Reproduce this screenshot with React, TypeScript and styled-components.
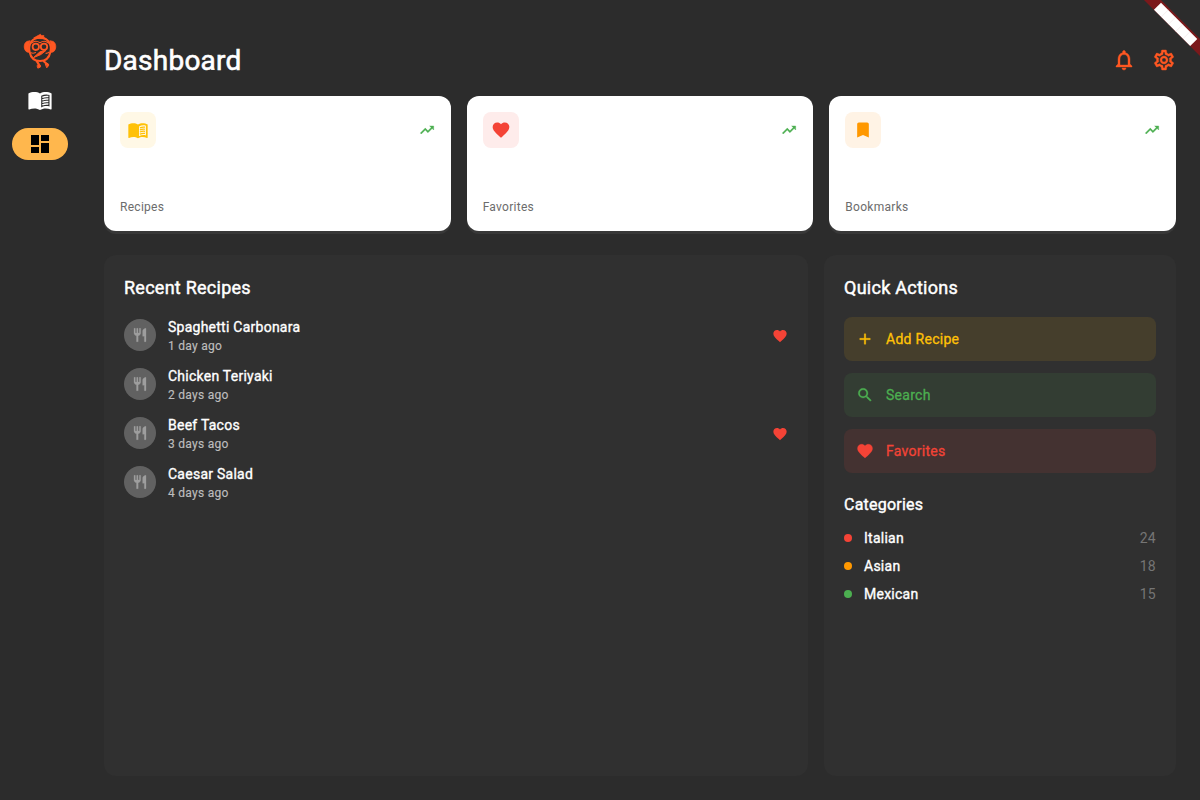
import React from 'react';
import styled, { createGlobalStyle } from 'styled-components';
import type { IconType } from 'react-icons';
import {
  MdAdd,
  MdBookmark,
  MdDashboard,
  MdFavorite,
  MdOutlineNotifications,
  MdOutlineSettings,
  MdRestaurant,
  MdSearch,
  MdTrendingUp,
} from 'react-icons/md';

const GlobalStyle = createGlobalStyle`
  * { box-sizing: border-box; }
  body {
    margin: 0;
    background: #2c2c2c;
    font-family: Roboto, "Liberation Sans", sans-serif;
    -webkit-font-smoothing: antialiased;
  }
  svg { display: block; flex: none; }
`;

const Shell = styled.div`
  position: relative;
  display: flex;
  width: 1200px;
  height: 800px;
  overflow: hidden;
  color: #fff;
`;

const Sidebar = styled.nav`
  width: 80px;
  display: flex;
  flex-direction: column;
  align-items: center;
  gap: 12px;
  padding-top: 32px;
`;

const Logo = styled.svg`
  width: 40px;
  height: 40px;
`;

const NavItem = styled.button<{ $active?: boolean }>`
  width: 56px;
  height: 32px;
  padding: 0;
  border: 0;
  border-radius: 16px;
  display: flex;
  align-items: center;
  justify-content: center;
  color: ${(p) => (p.$active ? '#000' : '#fff')};
  background: ${(p) => (p.$active ? '#ffb74d' : 'transparent')};
`;

const Main = styled.main`
  flex: 1;
  display: flex;
  flex-direction: column;
  padding: 24px;
`;

const Header = styled.header`
  height: 72px;
  display: flex;
  align-items: center;
  justify-content: space-between;
`;

const Title = styled.h1`
  margin: 0;
  padding-top: 2px;
  font-size: 28px;
  line-height: 36px;
  font-weight: 400;
  letter-spacing: 0.24px;
  -webkit-text-stroke: 0.6px currentColor;
`;

const HeaderIcons = styled.div`
  display: flex;
  gap: 16px;
  color: #ff5722;

  path:not([fill='none']) {
    stroke: currentColor;
    stroke-width: 0.4px;
  }
`;

const Stats = styled.section`
  display: grid;
  grid-template-columns: repeat(3, 1fr);
  gap: 16px;
  height: 135px;
  margin-bottom: 24px;
`;

const StatCard = styled.article`
  display: flex;
  flex-direction: column;
  justify-content: space-between;
  padding: 16px;
  border-radius: 12px;
  background: #fff;
  box-shadow: 0 3px 0 #383838;
`;

const StatTop = styled.div`
  display: flex;
  align-items: center;
  justify-content: space-between;
`;

const StatBadge = styled.div<{ $color: string; $tint: string }>`
  width: 36px;
  height: 36px;
  display: flex;
  align-items: center;
  justify-content: center;
  border-radius: 8px;
  color: ${(p) => p.$color};
  background: ${(p) => p.$tint};
`;

const Trend = styled(MdTrendingUp)`
  color: #4caf50;

  path:not([fill='none']) {
    stroke: currentColor;
    stroke-width: 0.6px;
  }
`;

const StatLabel = styled.div`
  font-size: 12px;
  line-height: 16px;
  letter-spacing: 0.28px;
  color: #6c6c6c;
`;

const Panels = styled.div`
  flex: 1;
  display: grid;
  grid-template-columns: 2fr 1fr;
  gap: 16px;
`;

const Panel = styled.section`
  padding: 20px;
  border-radius: 12px;
  background: #303030;
`;

const PanelTitle = styled.h2`
  margin: 0 0 16px;
  font-size: 18px;
  line-height: 26px;
  font-weight: 400;
  letter-spacing: 0.26px;
  -webkit-text-stroke: 0.45px currentColor;
`;

const RecipeRow = styled.div`
  height: 37px;
  margin-bottom: 12px;
  display: flex;
  align-items: center;
  gap: 12px;
  color: #f44336;
`;

const Avatar = styled.div`
  width: 32px;
  height: 32px;
  margin-bottom: 1px;
  border-radius: 50%;
  display: flex;
  align-items: center;
  justify-content: center;
  background: #616161;
  color: #9e9e9e;

  path:not([fill='none']) {
    stroke: currentColor;
    stroke-width: 0.4px;
  }
`;

const RecipeText = styled.div`
  flex: 1;
`;

const RecipeName = styled.div`
  font-size: 14px;
  line-height: 20px;
  font-weight: 400;
  letter-spacing: 0.25px;
  color: #fff;
  -webkit-text-stroke: 0.35px currentColor;
`;

const RecipeAge = styled.div`
  padding-top: 1px;
  font-size: 12px;
  line-height: 16px;
  letter-spacing: 0.28px;
  color: #bdbdbd;
  -webkit-text-stroke: 0.15px currentColor;
`;

const Action = styled.button<{ $color: string; $tint: string }>`
  width: 100%;
  height: 44px;
  margin-bottom: 12px;
  padding: 0 12px;
  border: 0;
  border-radius: 8px;
  display: flex;
  align-items: center;
  gap: 12px;
  font: 400 14px/20px Roboto, sans-serif;
  letter-spacing: 0.28px;
  -webkit-text-stroke: 0.3px currentColor;
  color: ${(p) => p.$color};
  background: ${(p) => p.$tint};
`;

const ActionIcon = styled.span`
  width: 18px;
  display: flex;
  justify-content: center;

  path:not([fill='none']) {
    stroke: currentColor;
    stroke-width: 0.4px;
  }
`;

const CategoriesTitle = styled.h3`
  margin: 20px 0 7px;
  font-size: 16px;
  line-height: 24px;
  font-weight: 400;
  letter-spacing: 0.23px;
  -webkit-text-stroke: 0.4px currentColor;
`;

const CategoryRow = styled.div`
  height: 28px;
  display: flex;
  align-items: center;
  font-size: 14px;
  letter-spacing: 0.25px;
`;

const Dot = styled.span<{ $color: string }>`
  width: 8px;
  height: 8px;
  margin-right: 12px;
  border-radius: 50%;
  background: ${(p) => p.$color};
`;

const CategoryName = styled.span`
  flex: 1;
  -webkit-text-stroke: 0.35px currentColor;
`;

const CategoryCount = styled.span`
  color: #757575;
`;

const Ribbon = styled.svg`
  position: absolute;
  top: 0;
  right: 0;
  width: 60px;
  height: 60px;
`;

function BookIcon({ size }: { size: number }) {
  return (
    <svg width={size} height={size} viewBox="0 -0.9 24 24" fill="currentColor">
      <path
        fillRule="evenodd"
        d="M0.400 4.600C2.300 3.500 4.300 3.100 6.400 3.100c2 0 4 .4 5.600 1.500C13.600 3.500 15.600 3.100 17.600 3.100c2.100 0 4.100.4 6 1.500v15.600c0 .4-.4.6-.8.400-1.600-.7-3.400-1.100-5.200-1.100-2 0-4 .5-5.600 1.600-1.600-1.100-3.600-1.600-5.600-1.600-1.800 0-3.600.4-5.200 1.100-.4.200-.8 0-.8-.400zM21.500 6c-2.600-.9-5.800-.6-8.300.8v11.700c2.500-1.300 5.700-1.700 8.300-.9z"
      />
      <path
        d="M14.300 8.500c1.900-.8 4.100-1.100 6.100-.8M14.300 11c1.900-.8 4.100-1.100 6.100-.8M14.300 13.500c1.900-.8 4.100-1.100 6.100-.8M14.300 16c1.900-.8 4.100-1.100 6.100-.8"
        fill="none"
        stroke="currentColor"
        strokeWidth="1.500"
      />
    </svg>
  );
}

type Glyph = IconType | typeof BookIcon;

const stats: { label: string; icon: Glyph; color: string; tint: string }[] = [
  { label: 'Recipes', icon: BookIcon, color: '#ffc107', tint: '#fff8e6' },
  { label: 'Favorites', icon: MdFavorite, color: '#f44336', tint: '#feeceb' },
  { label: 'Bookmarks', icon: MdBookmark, color: '#ff9800', tint: '#fff3e5' },
];

const recipes = [
  { name: 'Spaghetti Carbonara', age: '1 day ago', favorite: true },
  { name: 'Chicken Teriyaki', age: '2 days ago', favorite: false },
  { name: 'Beef Tacos', age: '3 days ago', favorite: true },
  { name: 'Caesar Salad', age: '4 days ago', favorite: false },
];

const actions: { label: string; icon: IconType; color: string; tint: string }[] = [
  { label: 'Add Recipe', icon: MdAdd, color: '#ffc107', tint: '#453e2c' },
  { label: 'Search', icon: MdSearch, color: '#4caf50', tint: '#333d33' },
  { label: 'Favorites', icon: MdFavorite, color: '#f44336', tint: '#443231' },
];

const categories = [
  { name: 'Italian', count: 24, color: '#f44336' },
  { name: 'Asian', count: 18, color: '#ff9800' },
  { name: 'Mexican', count: 15, color: '#4caf50' },
];

function MonkeyLogo() {
  return (
    <Logo viewBox="0 0 40 40" fill="none" stroke="#ff5722" strokeLinecap="round" strokeLinejoin="round">
      <path d="M14 5.800 18 3.600 20.500 2.300 21.200 3.600 24 3.700 23.500 5.200 26.500 6.800 20 6.600z" fill="#ff5722" strokeWidth="0.800" />
      <path d="M9.800 9C5 8.500 3.800 13 4.400 16c.5 3 2.600 4.800 5 4.200-.8-4-.7-7.500.4-11.200z" fill="#ff5722" strokeWidth="0.800" />
      <path d="M30.200 9c4.800-.5 6 4 5.400 7-.5 3-2.600 4.800-5 4.200.8-4 .7-7.500-.4-11.200z" fill="#ff5722" strokeWidth="0.800" />
      <path d="M9.600 20C8 12 12 5.800 20 5.800S32 12 30.400 20c-1.200 6-5.200 9-10.400 9S10.800 26 9.600 20z" strokeWidth="2" />
      <path d="M11.500 11c2.600-2.200 6-2 8.500-.2 2.500-1.800 5.900-2 8.500.2" strokeWidth="1.100" />
      <circle cx="15.800" cy="14.800" r="3.200" strokeWidth="1.800" />
      <circle cx="24" cy="14.800" r="3.200" strokeWidth="1.800" />
      <path d="M25.500 18.600 20 19.800 13.500 25.600 20.500 22.700z" fill="#ff5722" strokeWidth="1" />
      <path d="M11 20.800c1.500.6 3 .5 4.500-.3M26 21.400c1.200-.2 2.200-.6 3-1.200" strokeWidth="1.100" />
      <path d="M17 29.500 19.500 33.600M24 29.500l3.500 3" strokeWidth="2.300" />
      <path d="M17.300 33.400c1.600-1.400 3.600-.6 3.200 1.600l-2.300 1zM25.600 31.800c2-1.200 3.500 0 2.900 1.900l-1.500 1.800z" fill="#ff5722" strokeWidth="1" />
    </Logo>
  );
}

function CornerRibbon() {
  return (
    <Ribbon viewBox="0 0 60 60">
      <path d="M4 0h17l39 39v17z" fill="#7b191b" />
      <g transform="translate(21 2.700) rotate(45)">
        <rect width="51.300" height="10" fill="#fff" />
        <path d="M10.260 0v10M20.520 0v10M30.780 0v10M41.040 0v10" stroke="#e9d9da" strokeWidth="0.400" />
      </g>
    </Ribbon>
  );
}

export default function App() {
  return (
    <Shell>
      <GlobalStyle />
      <Sidebar>
        <MonkeyLogo />
        <NavItem aria-label="Recipes">
          <BookIcon size={24} />
        </NavItem>
        <NavItem $active aria-label="Dashboard">
          <MdDashboard size={24} />
        </NavItem>
      </Sidebar>
      <Main>
        <Header>
          <Title>Dashboard</Title>
          <HeaderIcons>
            <MdOutlineNotifications size={24} />
            <MdOutlineSettings size={24} />
          </HeaderIcons>
        </Header>
        <Stats>
          {stats.map(({ label, icon: Icon, color, tint }) => (
            <StatCard key={label}>
              <StatTop>
                <StatBadge $color={color} $tint={tint}>
                  <Icon size={20} />
                </StatBadge>
                <Trend size={16} />
              </StatTop>
              <StatLabel>{label}</StatLabel>
            </StatCard>
          ))}
        </Stats>
        <Panels>
          <Panel>
            <PanelTitle>Recent Recipes</PanelTitle>
            {recipes.map((r) => (
              <RecipeRow key={r.name}>
                <Avatar>
                  <MdRestaurant size={16} />
                </Avatar>
                <RecipeText>
                  <RecipeName>{r.name}</RecipeName>
                  <RecipeAge>{r.age}</RecipeAge>
                </RecipeText>
                {r.favorite && <MdFavorite size={16} />}
              </RecipeRow>
            ))}
          </Panel>
          <Panel>
            <PanelTitle>Quick Actions</PanelTitle>
            {actions.map(({ label, icon: Icon, color, tint }) => (
              <Action key={label} $color={color} $tint={tint}>
                <ActionIcon>
                  <Icon size={18} />
                </ActionIcon>
                {label}
              </Action>
            ))}
            <CategoriesTitle>Categories</CategoriesTitle>
            {categories.map((c) => (
              <CategoryRow key={c.name}>
                <Dot $color={c.color} />
                <CategoryName>{c.name}</CategoryName>
                <CategoryCount>{c.count}</CategoryCount>
              </CategoryRow>
            ))}
          </Panel>
        </Panels>
      </Main>
      <CornerRibbon />
    </Shell>
  );
}
